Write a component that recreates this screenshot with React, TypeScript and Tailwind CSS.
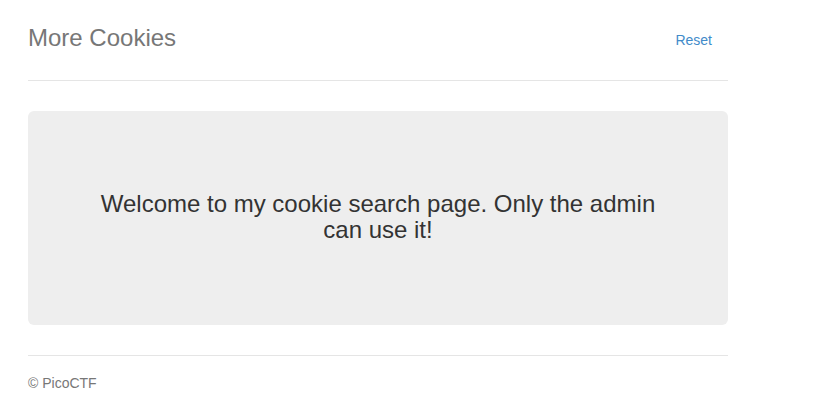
export default function App() {
  return (
    <div className="min-h-screen bg-white pt-[20px] font-['Liberation_Sans',Arial,sans-serif] text-[14px] leading-[20px] text-[#333]">
      <div className="ml-[13px] w-[730px] px-[15px]">
        <div className="flex h-[61px] items-start justify-between border-b border-[#e5e5e5]">
          <h3 className="m-0 text-[24px] leading-[36px] font-medium text-[#777]">More Cookies</h3>
          <nav>
            <a href="#" className="mr-[1px] block rounded px-[15px] py-[10px] text-[14px] leading-[20px] text-[#428bca]">
              Reset
            </a>
          </nav>
        </div>

        <div className="mt-[30px] mb-[30px] rounded-[6px] bg-[#eee] px-[60px] pt-[80px] pb-[81px] text-center">
          <h3 className="m-0 px-[12px] text-[24px] leading-[26.4px] font-medium text-[#333]">
            Welcome to my cookie search page. Only the admin can use it!
          </h3>
        </div>

        <footer className="border-t border-[#e5e5e5] pt-[17px] text-[#777]">
          <p className="m-0">© PicoCTF</p>
        </footer>
      </div>
    </div>
  );
}
